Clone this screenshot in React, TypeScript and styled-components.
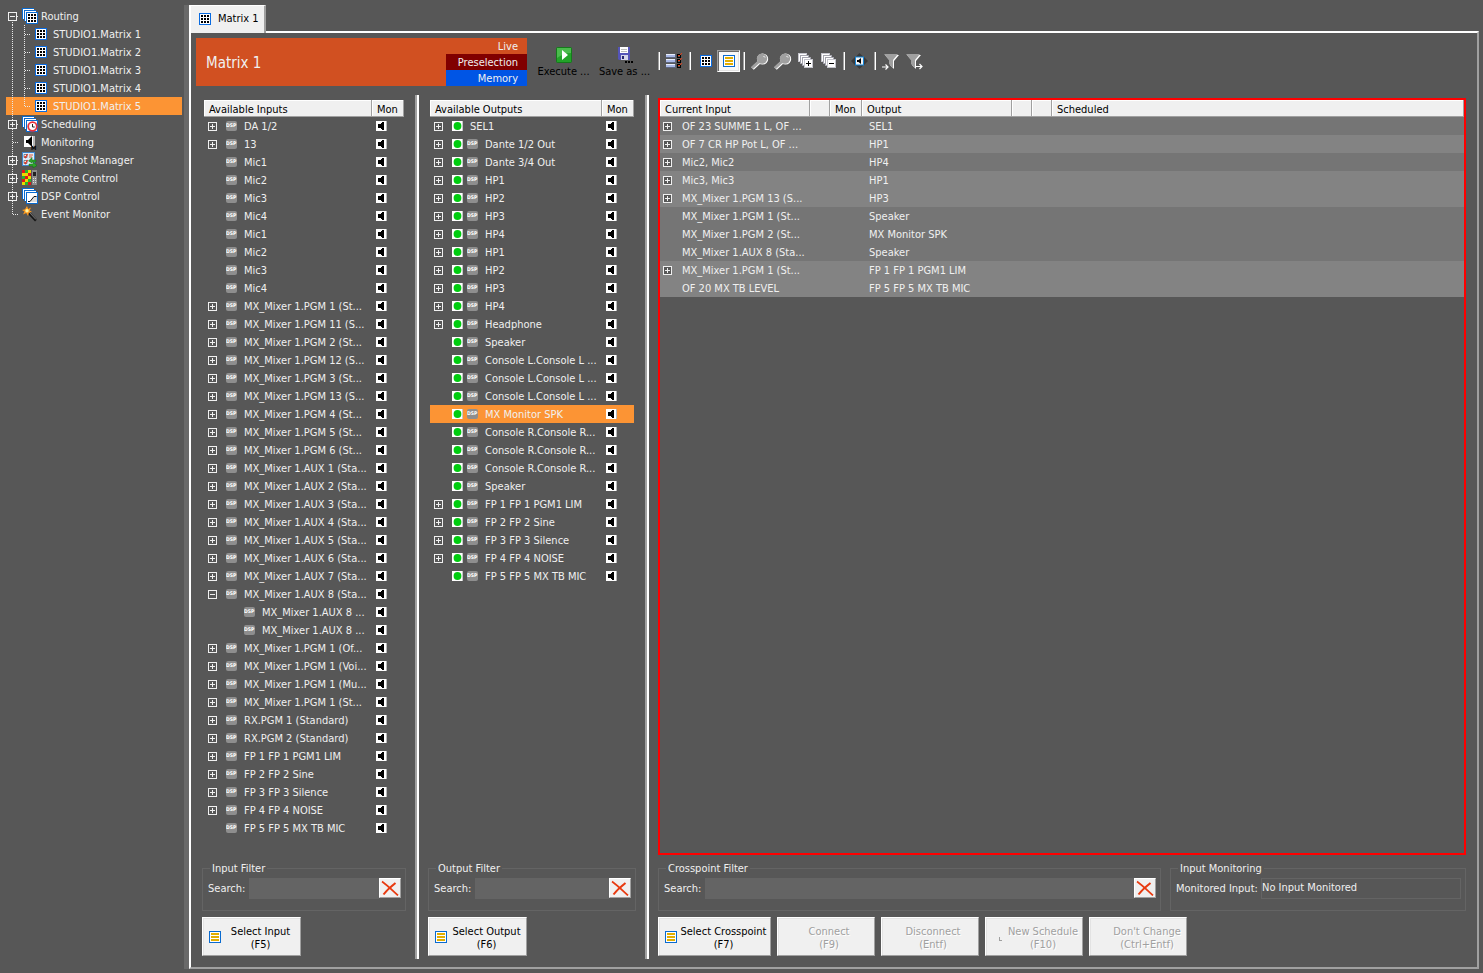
import React from "react";
import styled, { createGlobalStyle, css } from "styled-components";

const color = {
  page: "#575757",
  grip: "#696969",
  face: "#f0f0f0",
  shade: "#a0a0a0",
  text: "#f0f0f0",
  accent: "#fc9434",
  field: "#646464",
  line: "#646464",
};

const GlobalStyle = createGlobalStyle`
  *, *::before, *::after { box-sizing: border-box; }
  body { margin: 0; background: ${color.page}; }
  body, button, input, table {
    font-family: "DejaVu Sans Condensed", Tahoma, sans-serif;
    font-size: 11px;
    line-height: 14px;
  }
  button { padding: 0; border: 0; background: none; color: inherit; }
  svg { display: block; flex: none; }
`;

/* ---------- icons ---------- */

const GridIcon = () => (
  <svg width="12" height="12" viewBox="0 0 12 12" shapeRendering="crispEdges">
    <rect width="12" height="12" fill="#0a6be0" />
    <rect x="1" y="1" width="10" height="10" fill="#fff" />
    <path d="M2 2h2v2H2zM5 2h2v2H5zM8 2h2v2H8zM2 5h2v2H2zM5 5h2v2H5zM8 5h2v2H8zM2 8h2v2H2zM5 8h2v2H5zM8 8h2v2H8z" fill="#000" />
  </svg>
);

const ListIcon = () => (
  <svg width="12" height="12" viewBox="0 0 12 12" shapeRendering="crispEdges">
    <rect width="12" height="12" fill="#0a6bd0" />
    <rect x="1" y="1" width="10" height="10" fill="#fff" />
    <path d="M2 2h8v2H2zM2 5h8v2H2zM2 8h8v2H2z" fill="#e2ae00" />
  </svg>
);

const Sheets = () => (
  <g shapeRendering="crispEdges">
    <path d="M0 0h12v2H2v9H0zM2 2h12v2H4v9H2z" fill="#fff" />
    <path d="M0.5 11V0.5H12M2.5 13V2.5H14" fill="none" stroke="#0a6bd0" />
    <rect x="4.500" y="4.500" width="11" height="11" fill="#fff" stroke="#0a6bd0" />
  </g>
);

const RoutingIcon = () => (
  <svg width="16" height="16" viewBox="0 0 16 16">
    <Sheets />
    <path d="M6 6h2v2H6zM9 6h2v2H9zM12 6h2v2H12zM6 9h2v2H6zM9 9h2v2H9zM12 9h2v2H12zM6 12h2v2H6zM9 12h2v2H9zM12 12h2v2H12z" fill="#000" shapeRendering="crispEdges" />
  </svg>
);

const SchedulingIcon = () => (
  <svg width="16" height="16" viewBox="0 0 16 16">
    <Sheets />
    <circle cx="10.500" cy="10.500" r="4.300" fill="#fff" stroke="#e8323c" strokeWidth="1.800" />
    <path d="M10.500 8v3h2.200" fill="none" stroke="#222" />
  </svg>
);

const DspControlIcon = () => (
  <svg width="16" height="16" viewBox="0 0 16 16">
    <Sheets />
    <path d="M6 13h2l4-5h3v6H6z" fill="#ddd" />
    <path d="M6 13.500h2l4-5h2.500" fill="none" stroke="#111" />
  </svg>
);

const MonitoringIcon = () => (
  <svg width="16" height="16" viewBox="0 0 16 16">
    <rect x="2" y="2" width="11" height="11" fill="#fff" />
    <rect x="11" y="2" width="2" height="11" fill="#b8b8b8" />
    <path d="M4 6h2l4-4v11L6 9H4z" fill="#000" />
    <text x="9" y="16" fontSize="6" fontWeight="700" fill="#000">M</text>
  </svg>
);

const SnapshotIcon = () => (
  <svg width="16" height="16" viewBox="0 0 16 16">
    <rect x="0.500" y="0.500" width="12" height="13" fill="#dcebfa" stroke="#3d86d0" />
    <path d="M2 2.500h3v3H2zM2 8.500h3v3H2z" fill="#fff" stroke="#345" strokeWidth="0.600" />
    <path d="M2.500 4l1 1.500L5.500 2M2.500 10l1 1.500L5.500 8" fill="none" stroke="#e03020" strokeWidth="1.200" />
    <path d="M7 3h4M7 5h3" stroke="#e05a30" />
    <path d="M14 8H10V5.500L6.500 9 10 11V10h4zM7 12h4v-2l4 3.500L11 16v-2H7z" fill="#2fa52a" stroke="#0d6d10" strokeWidth="0.500" />
  </svg>
);

const RemoteIcon = () => (
  <svg width="16" height="16" viewBox="0 0 16 16" shapeRendering="crispEdges">
    <rect width="9" height="15" fill="#e8d800" />
    <path d="M0 0h3v3H0zM6 3h3v3H6zM0 9h3v3H0zM3 6h3v3H3zM6 12h3v3H6z" fill="#e01818" />
    <path d="M3 0h3v3H3zM0 6h3v3H0zM6 9h3v3H6zM3 12h3v3H3z" fill="#28b428" />
    <rect x="10" y="0" width="5" height="15" fill="#8c8c8c" />
    <rect x="11" y="2" width="3" height="4" fill="#222" />
    <path d="M11 8h1v1h-1zM13 8h1v1h-1zM11 10h1v1h-1zM13 10h1v1h-1zM11 12h1v1h-1zM13 12h1v1h-1z" fill="#ddd" />
  </svg>
);

const EventIcon = () => (
  <svg width="16" height="16" viewBox="0 0 16 16">
    <path d="M6.500 6.500l7.500 8" stroke="#151515" strokeWidth="2.600" />
    <path d="M7 6l7 7.500" stroke="#999" strokeWidth="0.800" />
    <path d="M5 0l1.200 3L9 1.500 7.700 4.500 10 6 7 6.500 6 10 4.300 7 1 8.500 2.500 5.500 0 4l3-.7z" fill="#ff9a1c" />
    <circle cx="5" cy="4.800" r="1.700" fill="#fff3a0" />
  </svg>
);

const SpeakerIcon = () => (
  <svg width="11" height="10" viewBox="0 0 11 10" shapeRendering="crispEdges">
    <rect width="11" height="10" fill="#fff" />
    <rect x="10" width="1" height="10" fill="#b8b8b8" />
    <path d="M2 3h3V2h1V1h2v8H6V8H5V7H2z" fill="#000" />
  </svg>
);

const DspIcon = () => (
  <svg width="12" height="10" viewBox="0 0 12 10">
    <rect width="11" height="10" rx="2" fill="#8e8e8e" />
    <text x="0" y="6" fontSize="5" fontWeight="700" fill="#fff">DSP</text>
  </svg>
);

const StatusIcon = () => (
  <svg width="11" height="10" viewBox="0 0 11 10">
    <rect width="11" height="10" fill="#fff" />
    <rect x="10" width="1" height="10" fill="#c8c8c8" />
    <circle cx="5.500" cy="5" r="3.900" fill="#00cc10" />
  </svg>
);

const ToggleIcon = ({ open }: { open?: boolean }) => (
  <svg width="9" height="9" viewBox="0 0 9 9" shapeRendering="crispEdges">
    <rect x="0.500" y="0.500" width="8" height="8" fill={color.page} stroke="#f0f0f0" />
    <path d={open ? "M2 4.500h5" : "M2 4.500h5M4.500 2v5"} stroke="#f0f0f0" />
  </svg>
);

const ClearIcon = () => (
  <svg width="18" height="16" viewBox="0 0 18 16">
    <path d="M1 1.500C6 5 11 10 17 15.500" fill="none" stroke="#e83a10" strokeWidth="1.700" />
    <path d="M14.500 3C10 6.500 6 10 2.500 14.500" fill="none" stroke="#e83a10" strokeWidth="2" />
  </svg>
);

const PlayIcon = () => (
  <svg width="16" height="16" viewBox="0 0 16 16">
    <rect x="0.500" y="0.500" width="15" height="15" rx="1" fill="#23a329" stroke="#157a1b" />
    <path d="M1 1h14v5C10 6 5 8 1 11z" fill="#5cc45c" opacity="0.700" />
    <path d="M6 3l6 5-6 5z" fill="#fff" />
  </svg>
);

const SaveIcon = () => (
  <svg width="16" height="16" viewBox="0 0 16 16">
    <path d="M1 0h12v13H2l-1-1z" fill="#5454b8" />
    <rect x="3" y="0" width="8" height="6" fill="#fff" />
    <path d="M4 2.500h6M4 4.500h6" stroke="#bbb" />
    <rect x="4" y="8" width="7" height="5" fill="#d4d4e8" />
    <rect x="5" y="9" width="2" height="3" fill="#26266e" />
    <path d="M8 14h2v2H8zM11 14h2v2h-2zM14 14h2v2h-2z" fill="#000" />
  </svg>
);

const ChecklistIcon = () => (
  <svg width="17" height="16" viewBox="0 0 17 16" shapeRendering="crispEdges">
    <path d="M0 1h10v4H0zM0 6h10v4H0zM0 11h10v4H0z" fill="#5c6680" />
    <path d="M0 1h9v3H0zM0 6h9v3H0zM0 11h9v3H0z" fill="#a9b8e6" />
    <path d="M0 1h9v1H0zM0 6h9v1H0zM0 11h9v1H0z" fill="#e8eefc" />
    <path d="M11.500 1.500h3v3h-3zM11.500 6.500h3v3h-3zM11.500 11.500h3v3h-3z" fill="#555" stroke="#000" />
    <path d="M12 2l1 1 3-3M12 7l1 1 3-3M12 12l1 1 3-3" fill="none" stroke="#e43c14" shapeRendering="auto" />
  </svg>
);

const LensIcon = () => (
  <svg width="18" height="17" viewBox="0 0 18 17">
    <path d="M1.500 15.500L8 9.500" stroke="#fff" strokeWidth="3.600" />
    <circle cx="11.600" cy="6" r="5.600" fill="#fff" />
    <circle cx="11" cy="5.600" r="5.200" fill="#a0a0a0" />
    <path d="M1 15L8 8.500" stroke="#a0a0a0" strokeWidth="2.800" />
    <path d="M12.500 3l1.500 1.500" stroke="#fff" />
  </svg>
);

const StackIcon = ({ minus }: { minus?: boolean }) => (
  <svg width="16" height="16" viewBox="0 0 16 16" shapeRendering="crispEdges">
    <path d="M0.500 0.500h8v8h-8z" fill="#fff" stroke="#c4c4cc" />
    <path d="M2.500 2.500h8v8h-8z" fill="#fff" stroke="#a4a4ae" />
    <path d="M4.500 4.500h8v8h-8z" fill="#fff" stroke="#a4a4ae" />
    <path d="M6.500 6.500h8v8h-8z" fill="#fff" stroke="#c4c4cc" />
    <path d={minus ? "M8 10.500h5" : "M8 10.500h5M10.500 8v5"} stroke="#000" />
  </svg>
);

const MonitorJumpIcon = () => (
  <svg width="17" height="16" viewBox="0 0 17 16">
    <path d="M8.500 0l4 4h-8zM8.500 16l4-4h-8zM0 8l4-4v8zM17 8l-4-4v8z" fill="#3a3a3a" />
    <rect x="4.500" y="4" width="8" height="8" fill="#f4f4f4" stroke="#1685d8" />
    <path d="M6 7h1.500l2.500-2v6L7.500 9H6z" fill="#000" />
  </svg>
);

const FunnelIcon = ({ right }: { right?: boolean }) => (
  <svg width="18" height="17" viewBox="0 0 18 17">
    <path d={right ? "M2 2h14l-5 6v8l-4-4V8z" : "M3 2h14l-5 6v8l-4-4V8z"} fill="#fff" />
    <path d={right ? "M1 1h14l-5 6v8l-4-4V7z" : "M2 1h14l-5 6v8l-4-4V7z"} fill="#a0a0a0" />
    <path d={right ? "M11 13.500h6M14.500 11l2.500 2.500-2.500 2.500" : "M0 14h6M3.500 11.500L6 14l-2.500 2.500"} fill="none" stroke="#fff" strokeWidth="1.200" />
  </svg>
);

const CornerIcon = () => (
  <svg width="12" height="12" viewBox="0 0 12 12" shapeRendering="crispEdges">
    <path d="M7.500 6v3.500H10" fill="none" stroke="#a0a0a0" />
  </svg>
);

const SpacerIcon = () => <svg width="12" height="12" aria-hidden="true" />;

/* ---------- page frame ---------- */

const Page = styled.div`
  display: flex;
  min-height: 100vh;
  padding: 5px 4px 4px 0;
  color: ${color.text};
`;

const Sidebar = styled.nav`
  flex: none;
  width: 184px;
  padding: 2px 2px 0 6px;
`;

const SidebarGrip = styled.div`
  flex: none;
  width: 5px;
  background: ${color.grip};
`;

const Main = styled.main`
  flex: 1;
  min-width: 0;
  display: flex;
  flex-direction: column;
`;

const Tab = styled.button`
  align-self: flex-start;
  position: relative;
  display: flex;
  align-items: center;
  gap: 7px;
  height: 28px;
  margin-bottom: -2px;
  padding: 0 5px 2px 8px;
  border: solid #fff;
  border-width: 1px 2px 0 2px;
  border-right-color: ${color.shade};
  background: ${color.face};
  color: #000;
`;

const Frame = styled.section`
  flex: 1;
  display: flex;
  flex-direction: column;
  padding: 5px 0 8px;
  border: 2px solid;
  border-color: #fff ${color.shade} ${color.shade} #fff;
`;

/* ---------- navigation tree ---------- */

const Tree = styled.ul`
  margin: 0;
  padding: 0;
  list-style: none;
`;

const TreeLink = styled.a<{ $active?: boolean }>`
  display: flex;
  align-items: center;
  height: 18px;
  color: ${color.text};
  text-decoration: none;
  white-space: nowrap;
  background: ${(p) => (p.$active ? color.accent : "transparent")};
`;

const TreeLabel = styled.span<{ $nested?: boolean }>`
  padding: 2px 0 0 ${(p) => (p.$nested ? 6 : 3)}px;
`;

type Branch = "open" | "closed" | "none";

const RootGuide = ({ branch, first, last, pass }: { branch?: Branch; first?: boolean; last?: boolean; pass?: boolean }) => (
  <svg width="16" height="18" viewBox="0 0 16 18" shapeRendering="crispEdges">
    <path d={`M6.500 ${first ? 9 : 0}V${last ? 10 : 18}`} stroke="#e8e8e8" strokeDasharray="1 1" />
    {!pass && <path d="M7 9.500h5" stroke="#e8e8e8" strokeDasharray="1 1" />}
    {branch && branch !== "none" && (
      <g transform="translate(2 5)">
        <rect x="0.500" y="0.500" width="8" height="8" fill={color.page} stroke="#f0f0f0" />
        <path d={branch === "open" ? "M2 4.500h5" : "M2 4.500h5M4.500 2v5"} stroke="#f0f0f0" />
      </g>
    )}
  </svg>
);

const ChildGuide = ({ last }: { last?: boolean }) => (
  <svg width="13" height="18" viewBox="0 0 13 18" shapeRendering="crispEdges">
    <path d={`M2.500 0V${last ? 10 : 18}M3 9.500h6`} stroke="#e8e8e8" strokeDasharray="1 1" />
  </svg>
);

const matrices = [1, 2, 3, 4, 5];

const sections: { label: string; icon: React.ReactNode; branch: Branch }[] = [
  { label: "Scheduling", icon: <SchedulingIcon />, branch: "closed" },
  { label: "Monitoring", icon: <MonitoringIcon />, branch: "none" },
  { label: "Snapshot Manager", icon: <SnapshotIcon />, branch: "closed" },
  { label: "Remote Control", icon: <RemoteIcon />, branch: "closed" },
  { label: "DSP Control", icon: <DspControlIcon />, branch: "closed" },
  { label: "Event Monitor", icon: <EventIcon />, branch: "none" },
];

const Navigation = () => (
  <Sidebar>
    <Tree>
      <li>
        <TreeLink href="#routing">
          <RootGuide branch="open" first />
          <RoutingIcon />
          <TreeLabel>Routing</TreeLabel>
        </TreeLink>
        <Tree>
          {matrices.map((n) => (
            <li key={n}>
              <TreeLink href={`#matrix-${n}`} $active={n === 5}>
                <RootGuide pass />
                <ChildGuide last={n === 5} />
                <GridIcon />
                <TreeLabel $nested>STUDIO1.Matrix {n}</TreeLabel>
              </TreeLink>
            </li>
          ))}
        </Tree>
      </li>
      {sections.map((s, i) => (
        <li key={s.label}>
          <TreeLink href={`#${s.label.toLowerCase().replace(" ", "-")}`}>
            <RootGuide branch={s.branch} last={i === sections.length - 1} />
            {s.icon}
            <TreeLabel>{s.label}</TreeLabel>
          </TreeLink>
        </li>
      ))}
    </Tree>
  </Sidebar>
);

/* ---------- toolbar ---------- */

const Toolbar = styled.header`
  display: flex;
  height: 48px;
  margin: 0 5px;
`;

const Banner = styled.div`
  flex: none;
  display: flex;
  width: 331px;
  background: #d15021;
`;

const BannerTitle = styled.h1`
  flex: 1;
  margin: 0;
  padding-left: 10px;
  font-size: 15px;
  font-weight: 400;
  line-height: 50px;
`;

const Modes = styled.div`
  width: 81px;
`;

const Mode = styled.div<{ $fill?: string }>`
  height: 16px;
  padding: 1px 9px 0 0;
  line-height: 16px;
  text-align: right;
  background: ${(p) => p.$fill ?? "transparent"};
`;

const Action = styled.button`
  width: 61px;
  padding-top: 9px;
  display: flex;
  flex-direction: column;
  align-items: center;
  gap: 2px;
  color: #000;
  white-space: nowrap;
`;

const Actions = styled.div`
  display: flex;
  align-items: flex-start;
  margin-left: 6px;
`;

const Tools = styled.div`
  display: flex;
  align-items: center;
  height: 46px;
`;

const ToolButton = styled.button<{ $checked?: boolean }>`
  display: flex;
  align-items: center;
  justify-content: center;
  width: 23px;
  height: 22px;
  ${(p) =>
    p.$checked &&
    css`
      border: 1px solid;
      border-color: ${color.shade} #fff #fff ${color.shade};
      box-shadow: inset 1px 1px 0 #696969, inset -1px -1px 0 #e3e3e3;
      background: #f8f8f8;
    `}
`;

const Separator = styled.div`
  width: 2px;
  height: 18px;
  margin: 0 3px;
  border-left: 1px solid ${color.shade};
  border-right: 1px solid #fff;
`;

const MatrixToolbar = () => (
  <Toolbar>
    <Banner>
      <BannerTitle>Matrix 1</BannerTitle>
      <Modes>
        <Mode>Live</Mode>
        <Mode $fill="#800000">Preselection</Mode>
        <Mode $fill="#0055e5">Memory</Mode>
      </Modes>
    </Banner>
    <Actions>
      <Action type="button"><PlayIcon />Execute ...</Action>
      <Action type="button"><SaveIcon />Save as ...</Action>
    </Actions>
    <Tools>
      <Separator />
      <ToolButton type="button" aria-label="Options"><ChecklistIcon /></ToolButton>
      <Separator />
      <ToolButton type="button" aria-label="Matrix view"><GridIcon /></ToolButton>
      <ToolButton type="button" aria-label="List view" aria-pressed="true" $checked><ListIcon /></ToolButton>
      <Separator />
      <ToolButton type="button" aria-label="Zoom in"><LensIcon /></ToolButton>
      <ToolButton type="button" aria-label="Zoom out"><LensIcon /></ToolButton>
      <ToolButton type="button" aria-label="Expand all"><StackIcon /></ToolButton>
      <ToolButton type="button" aria-label="Collapse all"><StackIcon minus /></ToolButton>
      <Separator />
      <ToolButton type="button" aria-label="Monitor"><MonitorJumpIcon /></ToolButton>
      <Separator />
      <ToolButton type="button" aria-label="Filter inputs"><FunnelIcon /></ToolButton>
      <ToolButton type="button" aria-label="Filter outputs"><FunnelIcon right /></ToolButton>
    </Tools>
  </Toolbar>
);

/* ---------- panes ---------- */

const Panes = styled.div`
  flex: 1;
  display: flex;
  margin-top: 9px;
`;

const Pane = styled.div<{ $width?: number; $left?: number; $right?: number }>`
  display: flex;
  flex-direction: column;
  min-width: 0;
  padding: 3px ${(p) => p.$right ?? 9}px 3px ${(p) => p.$left ?? 9}px;
  flex: ${(p) => (p.$width ? `0 0 ${p.$width}px` : 1)};
`;

const Splitter = styled.div`
  flex: none;
  width: 4px;
  background: #fff;
  border-left: 2px solid ${color.shade};
`;

const ListBox = styled.div<{ $focused?: boolean }>`
  flex: 1;
  margin-bottom: 6px;
  border: 2px solid ${(p) => (p.$focused ? "#f00" : "transparent")};
`;

const List = styled.table`
  width: 100%;
  table-layout: fixed;
  border-collapse: separate;
  border-spacing: 0;
`;

const HeadCell = styled.th<{ $width?: number }>`
  width: ${(p) => (p.$width ? `${p.$width}px` : "auto")};
  height: 17px;
  padding: 4px 0 0 5px;
  border: solid ${color.shade};
  border-width: 0 1px 1px 0;
  box-shadow: inset 1px 1px 0 #fff;
  background: ${color.face};
  color: #000;
  font-weight: 400;
  text-align: left;
  line-height: 12px;
  white-space: nowrap;
`;

const Row = styled.tr<{ $fill?: string }>`
  height: 18px;
  background: ${(p) => p.$fill ?? "transparent"};
`;

const Cell = styled.td<{ $left?: number }>`
  height: 18px;
  padding: 0 0 0 ${(p) => p.$left ?? 4}px;
  overflow: hidden;
  white-space: nowrap;
`;

const Entry = styled.div<{ $indent?: boolean }>`
  display: flex;
  align-items: center;
  height: 18px;
  padding-left: ${(p) => (p.$indent ? 18 : 0)}px;
`;

const Toggle = styled.button<{ $gap?: number }>`
  flex: none;
  width: 9px;
  height: 9px;
  margin-right: ${(p) => p.$gap ?? 9}px;
`;

const ToggleSpace = styled.span<{ $gap?: number }>`
  flex: none;
  width: 9px;
  margin-right: ${(p) => p.$gap ?? 9}px;
`;

const Badge = styled.span<{ $gap: number }>`
  flex: none;
  margin-right: ${(p) => p.$gap}px;
`;

const EntryLabel = styled.span<{ $flush?: boolean }>`
  padding: 2px 0 0 ${(p) => (p.$flush ? 0 : 3)}px;
`;

const MonButton = styled.button`
  display: block;
  width: 11px;
  height: 10px;
`;

type Item = { name: string; state?: "open" | "closed"; child?: boolean; plain?: boolean; selected?: boolean };

const closed = (name: string): Item => ({ name, state: "closed" });
const leaf = (name: string): Item => ({ name });

const inputs: Item[] = [
  closed("DA 1/2"),
  closed("13"),
  ...["Mic1", "Mic2", "Mic3", "Mic4", "Mic1", "Mic2", "Mic3", "Mic4"].map(leaf),
  ...[
    "PGM 1 (St...", "PGM 11 (S...", "PGM 2 (St...", "PGM 12 (S...", "PGM 3 (St...", "PGM 13 (S...",
    "PGM 4 (St...", "PGM 5 (St...", "PGM 6 (St...", "AUX 1 (Sta...", "AUX 2 (Sta...", "AUX 3 (Sta...",
    "AUX 4 (Sta...", "AUX 5 (Sta...", "AUX 6 (Sta...", "AUX 7 (Sta...",
  ].map((n) => closed(`MX_Mixer 1.${n}`)),
  { name: "MX_Mixer 1.AUX 8 (Sta...", state: "open" },
  { name: "MX_Mixer 1.AUX 8 ...", child: true },
  { name: "MX_Mixer 1.AUX 8 ...", child: true },
  ...["PGM 1 (Of...", "PGM 1 (Voi...", "PGM 1 (Mu...", "PGM 1 (St..."].map((n) => closed(`MX_Mixer 1.${n}`)),
  ...["RX.PGM 1 (Standard)", "RX.PGM 2 (Standard)", "FP 1 FP 1 PGM1 LIM", "FP 2 FP 2 Sine", "FP 3 FP 3 Silence", "FP 4 FP 4 NOISE"].map(closed),
  leaf("FP 5 FP 5 MX TB MIC"),
];

const outputs: Item[] = [
  { name: "SEL1", state: "closed", plain: true },
  ...["Dante 1/2 Out", "Dante 3/4 Out", "HP1", "HP2", "HP3", "HP4", "HP1", "HP2", "HP3", "HP4", "Headphone"].map(closed),
  ...["Speaker", "Console L.Console L ...", "Console L.Console L ...", "Console L.Console L ..."].map(leaf),
  { name: "MX Monitor SPK", selected: true },
  ...["Console R.Console R...", "Console R.Console R...", "Console R.Console R...", "Speaker"].map(leaf),
  ...["FP 1 FP 1 PGM1 LIM", "FP 2 FP 2 Sine", "FP 3 FP 3 Silence", "FP 4 FP 4 NOISE"].map(closed),
  leaf("FP 5 FP 5 MX TB MIC"),
];

const Expander = ({ state, gap }: { state?: "open" | "closed"; gap?: number }) =>
  state ? (
    <Toggle type="button" aria-label={state === "open" ? "Collapse" : "Expand"} $gap={gap}>
      <ToggleIcon open={state === "open"} />
    </Toggle>
  ) : (
    <ToggleSpace $gap={gap} />
  );

const ChannelList = ({ title, items, status }: { title: string; items: Item[]; status?: boolean }) => (
  <List>
    <thead>
      <tr>
        <HeadCell>{title}</HeadCell>
        <HeadCell $width={32}>Mon</HeadCell>
      </tr>
    </thead>
    <tbody>
      {items.map((item, i) => (
        <Row key={i} $fill={item.selected ? color.accent : undefined}>
          <Cell>
            <Entry $indent={item.child}>
              <Expander state={item.state} />
              {status && <Badge $gap={4}><StatusIcon /></Badge>}
              {!item.plain && <Badge $gap={3}><DspIcon /></Badge>}
              <EntryLabel>{item.name}</EntryLabel>
            </Entry>
          </Cell>
          <Cell>
            <MonButton type="button" aria-label={`Monitor ${item.name}`}><SpeakerIcon /></MonButton>
          </Cell>
        </Row>
      ))}
    </tbody>
  </List>
);

const dark = "#757575";
const light = "#838383";

const crosspoints: { input: string; output: string; fill: string; state?: "closed" }[] = [
  { input: "OF 23 SUMME 1 L, OF ...", output: "SEL1", fill: dark, state: "closed" },
  { input: "OF 7 CR HP Pot L, OF ...", output: "HP1", fill: light, state: "closed" },
  { input: "Mic2, Mic2", output: "HP4", fill: dark, state: "closed" },
  { input: "Mic3, Mic3", output: "HP1", fill: light, state: "closed" },
  { input: "MX_Mixer 1.PGM 13 (S...", output: "HP3", fill: light, state: "closed" },
  { input: "MX_Mixer 1.PGM 1 (St...", output: "Speaker", fill: dark },
  { input: "MX_Mixer 1.PGM 2 (St...", output: "MX Monitor SPK", fill: dark },
  { input: "MX_Mixer 1.AUX 8 (Sta...", output: "Speaker", fill: dark },
  { input: "MX_Mixer 1.PGM 1 (St...", output: "FP 1 FP 1 PGM1 LIM", fill: light, state: "closed" },
  { input: "OF 20 MX TB LEVEL", output: "FP 5 FP 5 MX TB MIC", fill: light },
];

const CrosspointList = () => (
  <List>
    <thead>
      <tr>
        <HeadCell $width={150}>Current Input</HeadCell>
        <HeadCell $width={20} />
        <HeadCell $width={32}>Mon</HeadCell>
        <HeadCell $width={150}>Output</HeadCell>
        <HeadCell $width={20} />
        <HeadCell $width={20} />
        <HeadCell>Scheduled</HeadCell>
      </tr>
    </thead>
    <tbody>
      {crosspoints.map((c, i) => (
        <Row key={i} $fill={c.fill}>
          <Cell $left={3}>
            <Entry>
              <Expander state={c.state} gap={7} />
              <EntryLabel>{c.input}</EntryLabel>
            </Entry>
          </Cell>
          <Cell />
          <Cell />
          <Cell $left={7}>
            <Entry>
              <EntryLabel $flush>{c.output}</EntryLabel>
            </Entry>
          </Cell>
          <Cell />
          <Cell />
          <Cell />
        </Row>
      ))}
    </tbody>
  </List>
);

/* ---------- filters and commands ---------- */

const Group = styled.fieldset<{ $width?: number }>`
  flex: ${(p) => (p.$width ? `0 0 ${p.$width}px` : 1)};
  min-width: 0;
  height: 50px;
  margin: 0;
  padding: 0 4px 0 5px;
  border: 1px solid ${color.line};
`;

const Legend = styled.legend`
  height: 14px;
  margin-left: 2px;
  padding: 0 2px;
  line-height: 16px;
`;

const GroupRow = styled.div`
  display: flex;
  height: 21px;
  margin-top: 3px;
`;

const FieldLabel = styled.label<{ $width: number }>`
  flex: none;
  width: ${(p) => p.$width}px;
  line-height: 22px;
  white-space: nowrap;
`;

const SearchInput = styled.input`
  flex: 1;
  min-width: 0;
  padding: 0 3px;
  border: 0;
  outline: 0;
  background: ${color.field};
  color: ${color.text};
`;

const MonitoredOutput = styled.output`
  flex: 1;
  border: 1px solid ${color.line};
  line-height: 18px;
`;

const raised = css`
  border: 1px solid;
  border-color: #fff ${color.shade} ${color.shade} #fff;
  background: ${color.face};
`;

const ClearButton = styled.button`
  ${raised}
  display: flex;
  align-items: center;
  justify-content: center;
  width: 22px;
  height: 20px;
`;

const Groups = styled.div`
  display: flex;
  gap: 9px;
`;

const Commands = styled.div`
  display: flex;
  gap: 6px;
  margin-top: 6px;
`;

const Command = styled.button<{ $width: number }>`
  ${raised}
  box-shadow: inset 1px 1px 0 #e3e3e3;
  display: flex;
  align-items: center;
  width: ${(p) => p.$width}px;
  height: 39px;
  padding: 0 0 0 6px;
  color: #000;
  line-height: 13px;

  &:disabled {
    color: ${color.shade};
    text-shadow: 1px 1px 0 #fff;
  }
`;

const CommandText = styled.span`
  flex: 1;
  padding-top: 2px;
  text-align: center;
  white-space: nowrap;
`;

const CommandButton = ({ label, hotkey, width, icon, disabled }: { label: string; hotkey: string; width: number; icon?: React.ReactNode; disabled?: boolean }) => (
  <Command type="button" $width={width} disabled={disabled}>
    {icon}
    <CommandText>
      {label}
      <br />({hotkey})
    </CommandText>
  </Command>
);

const SearchGroup = ({ title, id }: { title: string; id: string }) => (
  <Group>
    <Legend>{title}</Legend>
    <GroupRow>
      <FieldLabel htmlFor={id} $width={41}>Search:</FieldLabel>
      <SearchInput id={id} type="text" />
      <ClearButton type="button" aria-label="Clear search"><ClearIcon /></ClearButton>
    </GroupRow>
  </Group>
);

export default function App() {
  return (
    <>
      <GlobalStyle />
      <Page>
        <Navigation />
        <SidebarGrip />
        <Main>
          <Tab type="button"><GridIcon />Matrix 1</Tab>
          <Frame>
            <MatrixToolbar />
            <Panes>
              <Pane $width={224} $left={11}>
                <ListBox>
                  <ChannelList title="Available Inputs" items={inputs} />
                </ListBox>
                <Groups><SearchGroup title="Input Filter" id="input-filter" /></Groups>
                <Commands>
                  <CommandButton label="Select Input" hotkey="F5" width={99} icon={<ListIcon />} />
                </Commands>
              </Pane>
              <Splitter />
              <Pane $width={226}>
                <ListBox>
                  <ChannelList title="Available Outputs" items={outputs} status />
                </ListBox>
                <Groups><SearchGroup title="Output Filter" id="output-filter" /></Groups>
                <Commands>
                  <CommandButton label="Select Output" hotkey="F6" width={99} icon={<ListIcon />} />
                </Commands>
              </Pane>
              <Splitter />
              <Pane $right={11}>
                <ListBox $focused>
                  <CrosspointList />
                </ListBox>
                <Groups>
                  <SearchGroup title="Crosspoint Filter" id="crosspoint-filter" />
                  <Group $width={296}>
                    <Legend>Input Monitoring</Legend>
                    <GroupRow>
                      <FieldLabel htmlFor="monitored-input" $width={85}>Monitored Input:</FieldLabel>
                      <MonitoredOutput id="monitored-input">No Input Monitored</MonitoredOutput>
                    </GroupRow>
                  </Group>
                </Groups>
                <Commands>
                  <CommandButton label="Select Crosspoint" hotkey="F7" width={113} icon={<ListIcon />} />
                  <CommandButton label="Connect" hotkey="F9" width={98} disabled />
                  <CommandButton label="Disconnect" hotkey="Entf" width={98} disabled />
                  <CommandButton label="New Schedule" hotkey="F10" width={98} icon={<CornerIcon />} disabled />
                  <CommandButton label="Don't Change" hotkey="Ctrl+Entf" width={98} icon={<SpacerIcon />} disabled />
                </Commands>
              </Pane>
            </Panes>
          </Frame>
        </Main>
      </Page>
    </>
  );
}
